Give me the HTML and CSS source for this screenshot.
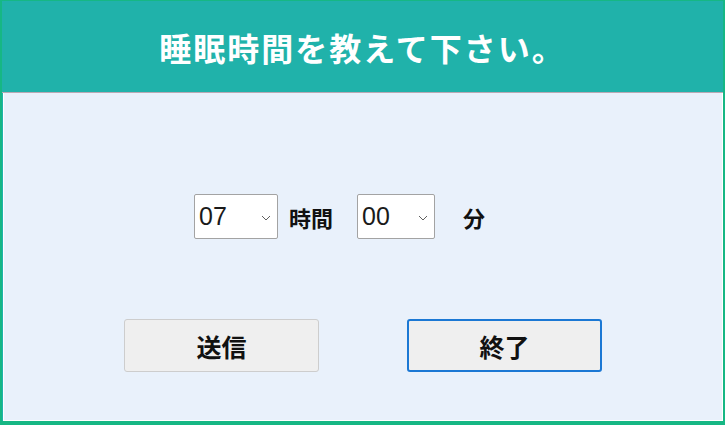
FILE: index.html
```html
<!DOCTYPE html>
<html lang="ja">
<head>
    <meta charset="UTF-8">
    <meta name="viewport" content="width=device-width, initial-scale=1.0">
    <title>睡眠時間</title>
    <link rel="stylesheet" href="styles.css">
</head>
<body>
    <div class="window">
        <div class="header">
            <h1>睡眠時間を教えて下さい。</h1>
        </div>

        <div class="content">
            <div class="time-row">
                <div class="select-box hours">
                    <select id="hours">
                        <option>07</option>
                        <option>08</option>
                    </select>
                    <svg class="chevron" width="10" height="6" viewBox="0 0 10 6"><path d="M1 1 L5 5 L9 1" fill="none" stroke="#606060" stroke-width="1"/></svg>
                </div>
                <span class="unit unit-hours">時間</span>
                <div class="select-box minutes">
                    <select id="minutes">
                        <option>00</option>
                        <option>30</option>
                    </select>
                    <svg class="chevron" width="10" height="6" viewBox="0 0 10 6"><path d="M1 1 L5 5 L9 1" fill="none" stroke="#606060" stroke-width="1"/></svg>
                </div>
                <span class="unit unit-minutes">分</span>
            </div>

            <div class="button-row">
                <button class="btn">送信</button>
                <button class="btn btn-focus">終了</button>
            </div>
        </div>
    </div>
</body>
</html>
```

FILE: styles.css
```css
html, body {
    margin: 0;
    padding: 0;
}
body {
    font-family: "Noto Sans CJK JP", "Noto Sans", sans-serif;
    width: 725px;
    height: 425px;
    overflow: hidden;
}
.window {
    box-sizing: border-box;
    width: 725px;
    height: 425px;
    border: 2px solid #16b784;
    border-top-width: 1px;
    border-bottom-width: 4px;
    display: flex;
    flex-direction: column;
    background-color: #20b2aa;
}
.header {
    height: 91px;
    display: flex;
    align-items: center;
    justify-content: center;
    border-bottom: 1px solid #b9a9b4;
}
.header h1 {
    margin: 0;
    color: #ffffff;
    font-size: 32px;
    font-weight: bold;
    letter-spacing: 2px;
    padding-left: 0;
}
.content {
    flex: 1;
    background-color: #e9f1fb;
    border: 1px solid #ffffff;
    border-top: none;
    margin-left: 1px;
    display: flex;
    flex-direction: column;
}
.time-row {
    display: flex;
    align-items: center;
    margin-top: 101px;
    padding-left: 190px;
    height: 45px;
}
.select-box {
    position: relative;
    height: 45px;
}
.select-box select {
    appearance: none;
    -webkit-appearance: none;
    box-sizing: border-box;
    height: 45px;
    border: 1px solid #a3a3a3;
    border-radius: 2px;
    background-color: #ffffff;
    color: #1a1a1a;
    font-family: "Liberation Sans", "Noto Sans", sans-serif;
    font-size: 25px;
    padding: 0 0 2px 4px;
    outline: none;
}
.hours select {
    width: 84px;
}
.minutes select {
    width: 78px;
}
.chevron {
    position: absolute;
    right: 7px;
    top: 21px;
    pointer-events: none;
}
.unit {
    font-size: 22px;
    font-weight: bold;
    color: #111111;
}
.unit-hours {
    margin-left: 11px;
    margin-right: 24px;
}
.unit-minutes {
    margin-left: 28px;
}
.button-row {
    display: flex;
    margin-top: 80px;
    padding-left: 120px;
    gap: 88px;
}
.btn {
    box-sizing: border-box;
    width: 195px;
    height: 53px;
    background-color: #efefef;
    border: 1px solid #cdcdcd;
    border-radius: 3px;
    font-family: "Noto Sans CJK JP", sans-serif;
    font-size: 25px;
    font-weight: bold;
    color: #111111;
    cursor: pointer;
}
.btn-focus {
    border: 2px solid #1b78d4;
}
```
